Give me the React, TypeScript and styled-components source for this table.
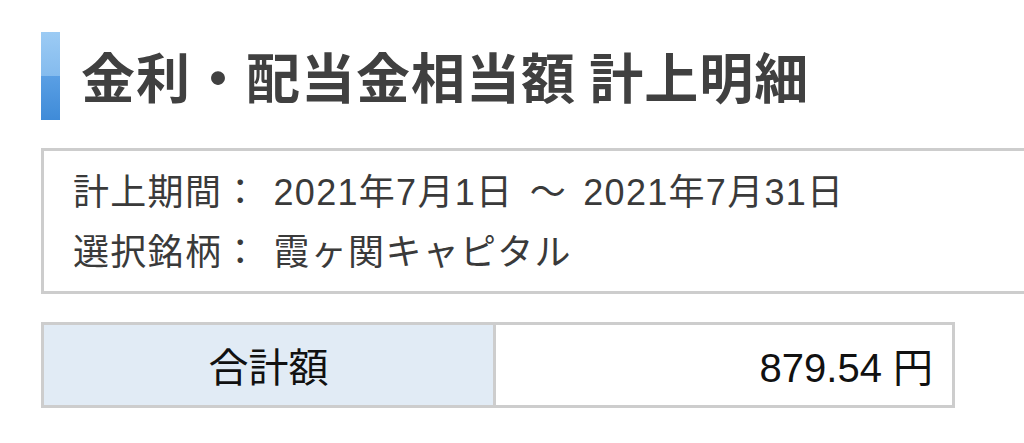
import React from "react";
import styled, { createGlobalStyle } from "styled-components";

const Global = createGlobalStyle`
  html, body { margin: 0; padding: 0; background: #ffffff; }
  body { font-family: "Liberation Sans", "Noto Sans CJK JP", sans-serif; overflow: hidden; }
`;

const Page = styled.div`
  width: 1024px;
  height: 443px;
  overflow: hidden;
  padding: 32px 0 0 41px;
  box-sizing: border-box;
`;

const Header = styled.div`
  display: flex;
  align-items: center;
  gap: 21px;
  height: 88px;
`;

const Bar = styled.div`
  width: 19px;
  height: 88px;
  background: linear-gradient(
    to bottom,
    #9ccbf4 0%,
    #84bbee 50%,
    #5a9fe4 50%,
    #3f8bd8 100%
  );
`;

const Title = styled.h1`
  margin: 0;
  font-family: "Noto Sans CJK JP", sans-serif;
  font-weight: 700;
  font-size: 54px;
  color: #404040;
  letter-spacing: 1px;
  line-height: 1;
`;

const InfoBox = styled.div`
  margin-top: 28px;
  width: 1100px;
  height: 146px;
  box-sizing: border-box;
  border: 3px solid #cdcdcd;
  padding: 12px 0 0 29px;
  display: flex;
  flex-direction: column;
`;

const InfoRow = styled.div`
  font-size: 36px;
  line-height: 60px;
  color: #3a3a3a;
  letter-spacing: 1.3px;
  word-spacing: 5px;
  white-space: nowrap;
`;

const Label = styled.span`
  margin-right: 14px;
`;

const Table = styled.div`
  margin-top: 28px;
  width: 914px;
  height: 86px;
  box-sizing: border-box;
  border: 3px solid #cdcdcd;
  display: grid;
  grid-template-columns: 452px 1fr;
`;

const Cell = styled.div<{ $head?: boolean }>`
  display: flex;
  align-items: center;
  justify-content: ${(p) => (p.$head ? "center" : "flex-end")};
  background: ${(p) => (p.$head ? "#e1ebf5" : "#ffffff")};
  border-right: ${(p) => (p.$head ? "3px solid #cdcdcd" : "none")};
  padding-right: ${(p) => (p.$head ? "0" : "19px")};
  font-size: 40px;
  color: #111111;
`;

export default function App() {
  return (
    <>
      <Global />
      <Page>
        <Header>
          <Bar />
          <Title>金利・配当金相当額 計上明細</Title>
        </Header>
        <InfoBox>
          <InfoRow>
            <Label>計上期間：</Label>2021年7月1日 ～ 2021年7月31日
          </InfoRow>
          <InfoRow>
            <Label>選択銘柄：</Label>霞ヶ関キャピタル
          </InfoRow>
        </InfoBox>
        <Table>
          <Cell $head>合計額</Cell>
          <Cell>879.54 円</Cell>
        </Table>
      </Page>
    </>
  );
}
